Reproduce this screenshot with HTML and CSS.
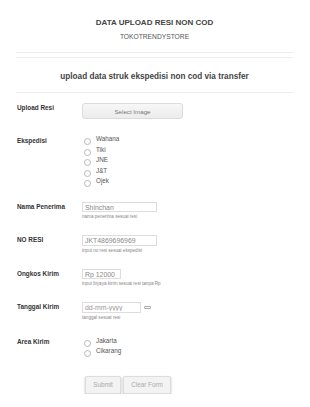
FILE: index.html
```html
<!DOCTYPE html>
<html lang="id">
<head>
<meta charset="utf-8">
<title>Data Upload Resi Non COD</title>
<link rel="stylesheet" href="styles.css">
</head>
<body>
<div class="page">
  <header class="header">
    <h1 class="title">DATA UPLOAD RESI NON COD</h1>
    <div class="subtitle">TOKOTRENDYSTORE</div>
  </header>
  <section class="intro">
    <h2 class="heading">upload data struk ekspedisi non cod via transfer</h2>
  </section>
  <form class="form">
    <div class="row">
      <label class="label">Upload Resi</label>
      <div class="field">
        <button type="button" class="btn-select">Select Image</button>
      </div>
    </div>
    <div class="row">
      <label class="label label-list">Ekspedisi</label>
      <div class="field radios">
        <label class="radio"><input type="radio" name="eks"><span>Wahana</span></label>
        <label class="radio"><input type="radio" name="eks"><span>Tiki</span></label>
        <label class="radio"><input type="radio" name="eks"><span>JNE</span></label>
        <label class="radio"><input type="radio" name="eks"><span>J&amp;T</span></label>
        <label class="radio"><input type="radio" name="eks"><span>Ojek</span></label>
      </div>
    </div>
    <div class="row">
      <label class="label">Nama Penerima</label>
      <div class="field">
        <input class="text w-lg" type="text" value="Shinchan">
        <div class="help">nama penerima sesuai resi</div>
      </div>
    </div>
    <div class="row">
      <label class="label">NO RESI</label>
      <div class="field">
        <input class="text w-lg" type="text" value="JKT4869696969">
        <div class="help">input no resi sesuai ekspedisi</div>
      </div>
    </div>
    <div class="row">
      <label class="label">Ongkos Kirim</label>
      <div class="field">
        <input class="text w-sm" type="text" value="Rp 12000">
        <div class="help">input biyaya kirim sesuai resi tanpa Rp</div>
      </div>
    </div>
    <div class="row">
      <label class="label">Tanggal Kirim</label>
      <div class="field">
        <div class="date-line">
          <input class="text w-md" type="text" placeholder="dd-mm-yyyy">
          <span class="cal-icon"></span>
        </div>
        <div class="help">tanggal sesuai resi</div>
      </div>
    </div>
    <div class="row">
      <label class="label label-list2">Area Kirim</label>
      <div class="field radios radios-tight">
        <label class="radio"><input type="radio" name="area"><span>Jakarta</span></label>
        <label class="radio"><input type="radio" name="area"><span>Cikarang</span></label>
      </div>
    </div>
    <div class="row row-actions">
      <div class="label"></div>
      <div class="field actions">
        <button type="button" class="btn btn-submit">Submit</button>
        <button type="button" class="btn btn-clear">Clear Form</button>
      </div>
    </div>
  </form>
</div>
</body>
</html>
```

FILE: styles.css
```css
html, body {
  margin: 0;
  padding: 0;
  background: #ffffff;
}

body {
  font-family: "Liberation Sans", Arial, sans-serif;
  color: #333;
}

.page {
  width: 277px;
  margin-left: 16px;
}

.header {
  text-align: center;
  padding-top: 18px;
  padding-bottom: 11px;
  border-bottom: 1px solid #eeeeee;
}

.title {
  margin: 0;
  font-size: 8px;
  line-height: 10px;
  font-weight: bold;
  color: #444;
}

.subtitle {
  margin-top: 5px;
  font-size: 6.7px;
  line-height: 8px;
  color: #555;
}

.intro {
  margin-top: 4px;
  border-top: 1px solid #f0f0f0;
  border-bottom: 1px solid #eeeeee;
  padding: 14px 0 10px;
  text-align: center;
}

.heading {
  margin: 0;
  font-size: 8.2px;
  line-height: 10px;
  font-weight: bold;
  color: #444;
}

.form {
  display: flex;
  flex-direction: column;
  gap: 15px;
  padding-top: 10px;
}

.row {
  display: flex;
  align-items: flex-start;
}

.label {
  width: 66px;
  padding-left: 1px;
  padding-top: 1px;
  flex: none;
  box-sizing: border-box;
  font-size: 6.4px;
  line-height: 8px;
  font-weight: bold;
  color: #333;
}

.label-list {
  padding-top: 3px;
}

.label-list2 {
  padding-top: 2px;
}

.field {
  display: flex;
  flex-direction: column;
  align-items: flex-start;
}

.btn-select {
  width: 101px;
  height: 16px;
  margin: 0;
  padding: 0;
  border: 1px solid #dcdcdc;
  border-radius: 3px;
  background: linear-gradient(#f7f7f7, #ececec);
  font-family: inherit;
  font-size: 6.2px;
  color: #777;
}

.radios {
  padding-left: 2px;
}

.radio {
  display: flex;
  align-items: flex-start;
  height: 10.6px;
  font-size: 6.3px;
  line-height: 10px;
  color: #555;
}

.radios-tight .radio {
  height: 10.4px;
}

.radio input {
  appearance: none;
  -webkit-appearance: none;
  width: 7px;
  height: 7px;
  margin: 4px 5px 0 0;
  border: 1px solid #b8b8b8;
  border-radius: 50%;
  background: #fff;
  box-sizing: border-box;
  flex: none;
}

.text {
  height: 10.5px;
  margin: 0;
  padding: 0 2px;
  box-sizing: border-box;
  border: 1px solid #dddddd;
  border-radius: 0;
  font-family: inherit;
  font-size: 6.9px;
  color: #888;
  background: #fff;
  outline: none;
}

.text::placeholder {
  color: #999;
}

.w-lg { width: 75px; }
.w-md { width: 59px; }
.w-sm { width: 39px; }

.help {
  margin-top: 2px;
  font-size: 4.6px;
  line-height: 6px;
  color: #888;
  white-space: nowrap;
}

.date-line {
  display: flex;
  align-items: center;
  gap: 2.5px;
}

.cal-icon {
  width: 7px;
  height: 3px;
  border: 1px solid #aaa;
  border-radius: 1px;
  box-sizing: border-box;
}

.row-actions {
  margin-top: 4px;
}

.actions {
  flex-direction: row;
  gap: 2px;
  padding-left: 3px;
}

.btn {
  height: 18px;
  margin: 0;
  padding: 0;
  border: 1px solid #dddddd;
  border-radius: 2px;
  background: #f3f3f3;
  box-shadow: 0 1px 2px rgba(0, 0, 0, 0.3);
  font-family: inherit;
  font-size: 6.3px;
  color: #aaa;
}

.btn-submit { width: 36px; }
.btn-clear { width: 48px; }
```
